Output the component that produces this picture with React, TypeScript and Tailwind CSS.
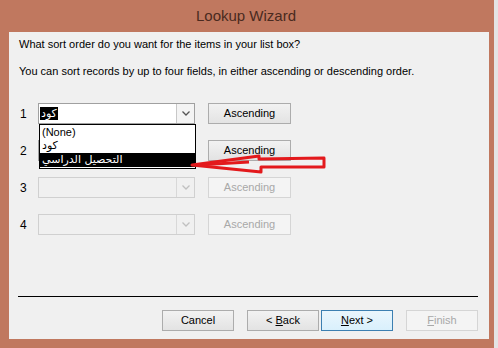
import React from 'react';

const font = { fontFamily: '"Liberation Sans", Arial, "DejaVu Sans", sans-serif' };
const arabic = { fontFamily: '"DejaVu Sans", sans-serif', fontSize: 11 };

const Btn: React.FC<{ label: React.ReactNode; disabled?: boolean; primary?: boolean; className?: string }> = ({
  label,
  disabled,
  primary,
  className = '',
}) => (
  <div
    className={`flex items-center justify-center h-[21px] text-[11px] border ${
      disabled
        ? 'border-[#d5d5d5] bg-[#f4f4f4] text-[#a8a8a8]'
        : primary
        ? 'border-[#3c7fb1] bg-gradient-to-b from-[#eaf6fd] to-[#d9f0fc] text-black'
        : 'border-[#acacac] bg-gradient-to-b from-[#f2f2f2] to-[#e3e3e3] text-black'
    } ${className}`}
  >
    {label}
  </div>
);

const Combo: React.FC<{ disabled?: boolean; children?: React.ReactNode }> = ({ disabled, children }) => (
  <div
    className={`flex w-[157px] h-[21px] border ${
      disabled ? 'border-[#d0d0d0] bg-[#f0f0f0]' : 'border-[#a0a0a0] bg-white'
    }`}
  >
    <div className="flex-1 flex items-center pl-[1px]">{children}</div>
    <div
      className={`w-[18px] flex items-center justify-center border-l ${
        disabled ? 'border-[#d8d8d8]' : 'border-[#c8c8c8] bg-[#f4f4f4]'
      }`}
    >
      <svg width="8" height="5" viewBox="0 0 8 5">
        <path d="M0.5 0.5 L4 4 L7.5 0.5" fill="none" stroke={disabled ? '#c0c0c0' : '#555'} strokeWidth="1.3" />
      </svg>
    </div>
  </div>
);

const Row: React.FC<{ n: number; disabled?: boolean; children?: React.ReactNode }> = ({ n, disabled, children }) => (
  <div className="flex items-center h-[21px]">
    <span className="w-[19px] pl-[1px] text-[12px] text-black">{n}</span>
    <Combo disabled={disabled}>{children}</Combo>
    <Btn label="Ascending" disabled={disabled} className="ml-[13px] w-[83px]" />
  </div>
);

export default function App() {
  return (
    <div className="flex w-[498px] h-[348px] overflow-hidden" style={font}>
      <div className="flex flex-col w-[494px] h-full bg-[#c0785f] pl-[9px] pr-[5px] pb-[9px]">
        <div className="h-[32px] flex items-center justify-center text-[15px] text-[#4a2a20] pr-[6px]">
          Lookup Wizard
        </div>
        <div className="relative flex-1 flex flex-col bg-[#f0f0f0] pl-[10px] pr-[11px] text-[11px] text-black">
          <p className="mt-[5px] leading-[14px]">What sort order do you want for the items in your list box?</p>
          <p className="mt-[13px] leading-[14px]">
            You can sort records by up to four fields, in either ascending or descending order.
          </p>

          <div className="flex flex-col gap-[16px] mt-[25px]">
            <Row n={1}>
              <span className="bg-black text-white px-[1px] leading-[13px]" dir="rtl" style={arabic}>
                كود
              </span>
            </Row>
            <Row n={2} />
            <Row n={3} disabled />
            <Row n={4} disabled />
          </div>

          <div className="flex-1" />
          <div className="border-t border-black mb-[13px] ml-[-1px]" />
          <div className="flex justify-end mb-[8px]">
            <Btn label="Cancel" className="w-[72px]" />
            <Btn
              label={
                <span>
                  &lt; <u>B</u>ack
                </span>
              }
              className="w-[72px] ml-[13px]"
            />
            <Btn
              label={
                <span>
                  <u>N</u>ext &gt;
                </span>
              }
              primary
              className="w-[72px] ml-[2px]"
            />
            <Btn
              label={
                <span>
                  <u>F</u>inish
                </span>
              }
              disabled
              className="w-[72px] ml-[13px]"
            />
          </div>

          {/* open dropdown list */}
          <div className="absolute left-[30px] top-[92px] w-[157px] h-[45px] border border-black bg-white flex flex-col text-[11px]">
            <div className="h-[14px] leading-[14px] pl-[2px]">(None)</div>
            <div className="h-[14px] leading-[14px] pl-[2px]" style={arabic}>
              <span dir="rtl">كود</span>
            </div>
            <div className="h-[14px] leading-[14px] pl-[2px] bg-black text-white" style={arabic}>
              <span dir="rtl">التحصيل الدراسي</span>
            </div>
          </div>

          {/* red annotation arrow */}
          <svg className="absolute left-[180px] top-[121px]" width="140" height="22" viewBox="0 0 140 22">
            <path
              d="M3 12 L70 3 L70 6 L135 5 L135 14 L72 14 L72 19 Z"
              fill="none"
              stroke="#e3191c"
              strokeWidth="3"
              strokeLinejoin="round"
            />
            <path d="M8 12 L60 9" stroke="#e3191c" strokeWidth="3" />
          </svg>
        </div>
      </div>
      <div className="w-[4px] h-full bg-[#e4e4e4]" />
    </div>
  );
}
